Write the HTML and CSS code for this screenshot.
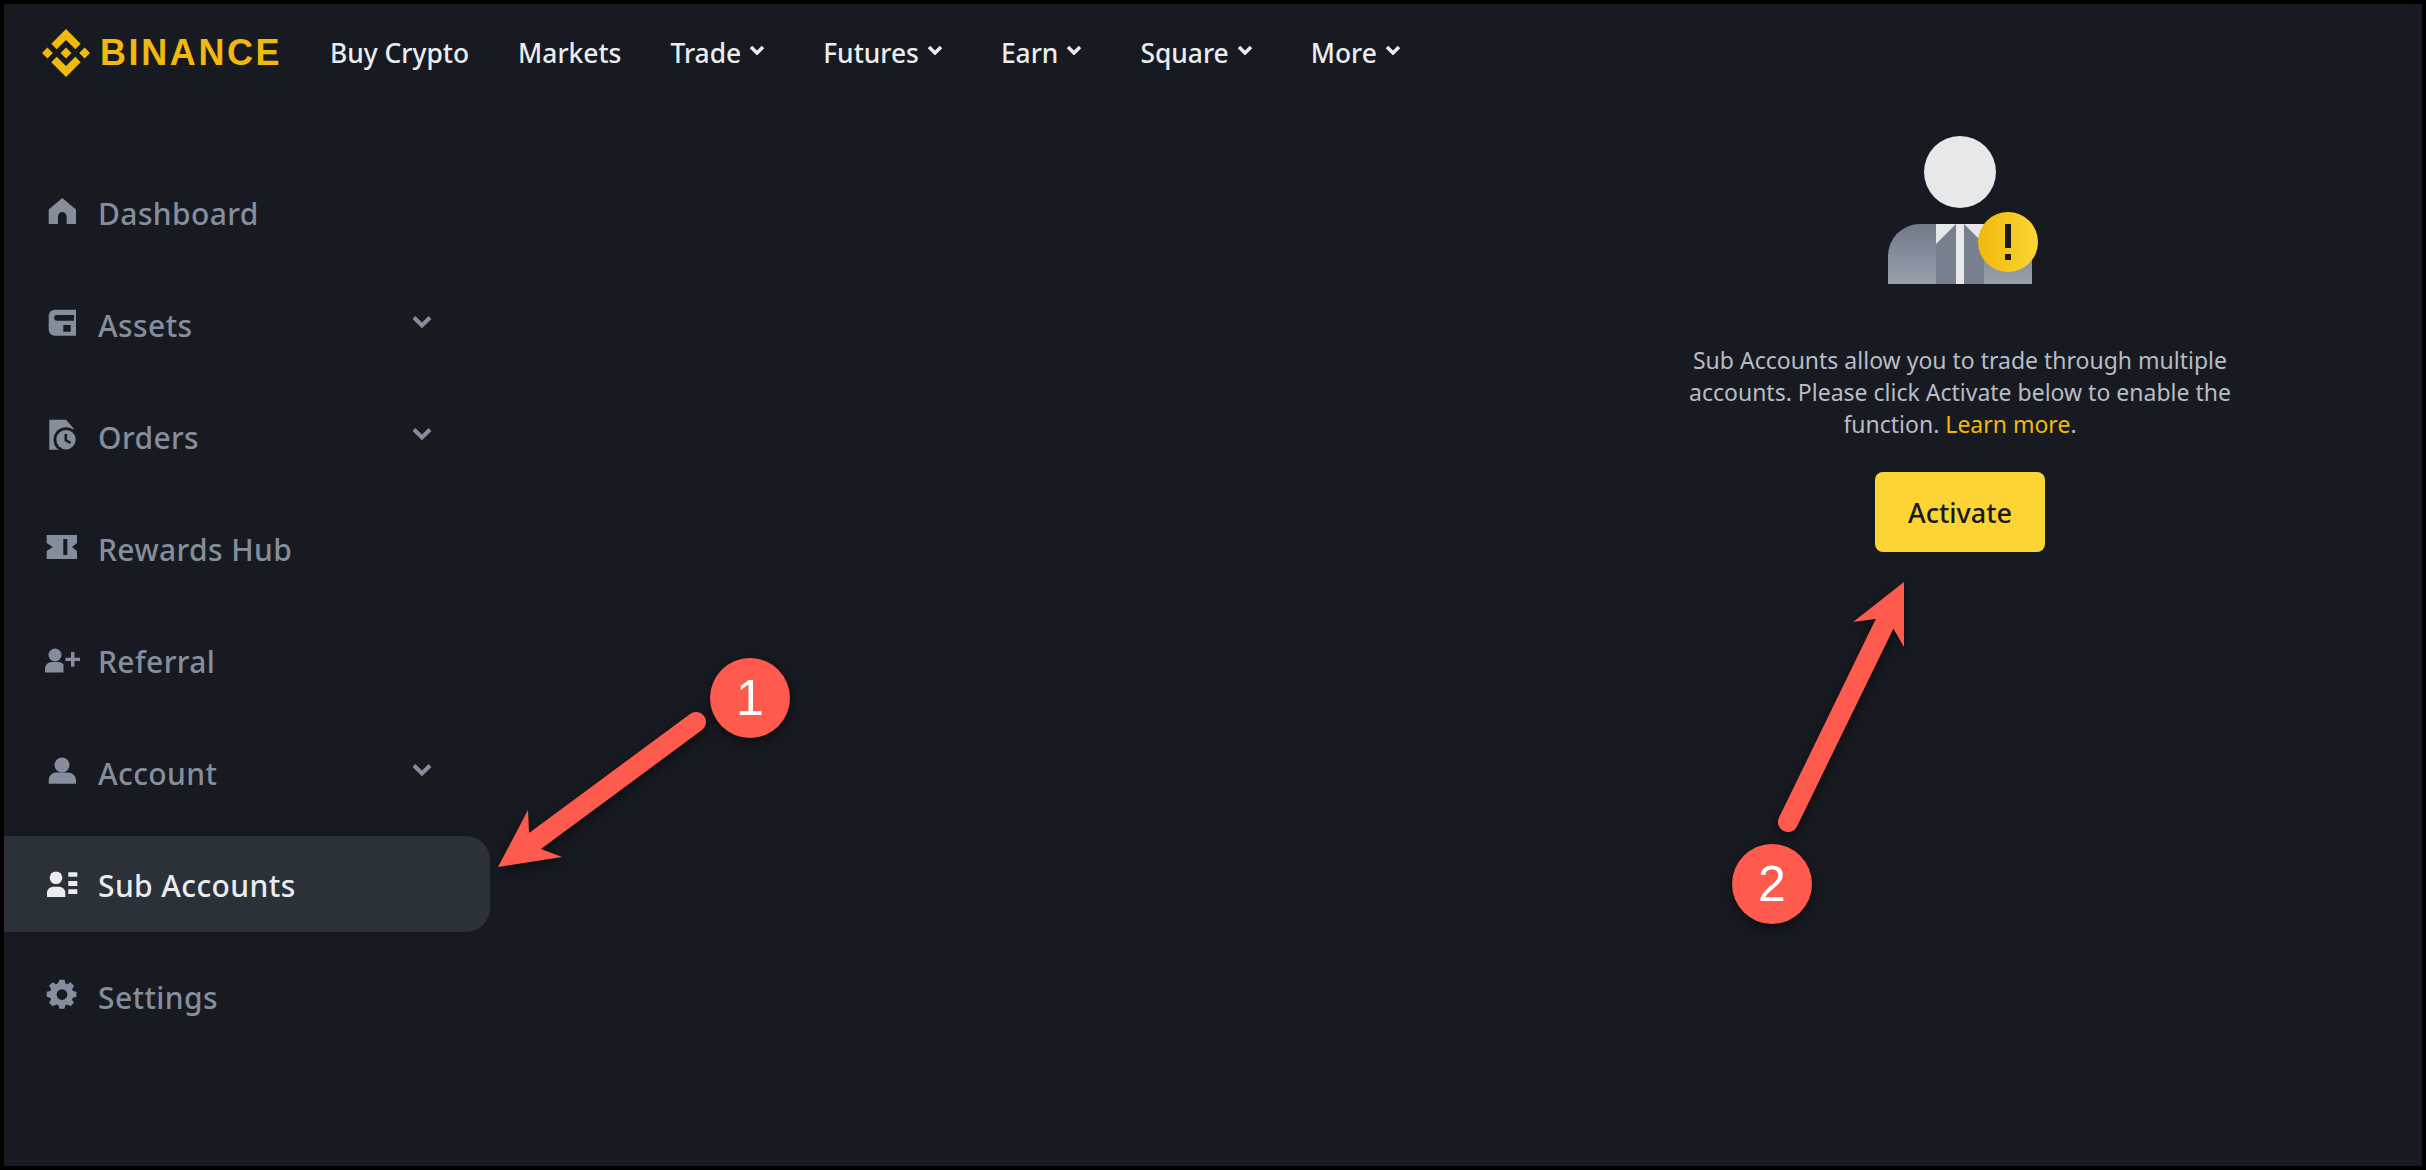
FILE: index.html
```html
<!DOCTYPE html>
<html lang="en">
<head>
    <meta charset="UTF-8">
    <title>Binance - Sub Accounts</title>
    <link rel="stylesheet" href="styles.css">
</head>
<body>

<div class="frame">
    <header class="topbar">
        <a class="logo">
            <svg class="logo-mark" viewBox="0 0 48 48"><path d="M14.700 20.200 24 10.900l9.300 9.300 5.400-5.400L24 0 9.300 14.800zM0 24l5.400-5.400L10.800 24l-5.400 5.400zM14.700 27.800 24 37.100l9.300-9.300 5.400 5.400L24 48 9.300 33.200zM37.200 24l5.400-5.400L48 24l-5.400 5.400zM29.500 24 24 18.500 18.500 24l5.500 5.500z"/></svg>
            <span class="logo-text">BINANCE</span>
        </a>
        <nav class="nav">
            <a class="nav-link">Buy Crypto</a>
            <a class="nav-link">Markets</a>
            <a class="nav-link has-menu">Trade <svg class="caret" viewBox="0 0 16 10"><path d="M2 2l6 6 6-6"/></svg></a>
            <a class="nav-link has-menu">Futures <svg class="caret" viewBox="0 0 16 10"><path d="M2 2l6 6 6-6"/></svg></a>
            <a class="nav-link has-menu">Earn <svg class="caret" viewBox="0 0 16 10"><path d="M2 2l6 6 6-6"/></svg></a>
            <a class="nav-link has-menu">Square <svg class="caret" viewBox="0 0 16 10"><path d="M2 2l6 6 6-6"/></svg></a>
            <a class="nav-link has-menu">More <svg class="caret" viewBox="0 0 16 10"><path d="M2 2l6 6 6-6"/></svg></a>
        </nav>
    </header>

    <div class="page">
        <aside class="sidebar">
            <a class="side-item">
                <svg class="side-icon" viewBox="0 0 40 40"><path d="M20.300 6 34 17.500V32h-9.300v-7.500a4.400 4.400 0 0 0-8.800 0V32H6.700V17.500z"/></svg>
                <span class="side-label">Dashboard</span>
            </a>
            <a class="side-item">
                <svg class="side-icon" viewBox="0 0 40 40"><path fill-rule="evenodd" d="M12.700 5.700H34v26H12.700a6 6 0 0 1-6-6v-14a6 6 0 0 1 6-6zM15 11a2.800 2.800 0 0 0 0 5.700h17V11zM21.300 21v6.700h7.400V21z"/></svg>
                <span class="side-label">Assets</span>
                <svg class="side-caret" viewBox="0 0 20 14"><path d="M2 2.500l8 8 8-8"/></svg>
            </a>
            <a class="side-item">
                <svg class="side-icon" viewBox="0 0 40 40"><path d="M7.300 3.700H24l7.500 8.500V33.700H7.300z"/><circle class="icon-gap" cx="24" cy="23.700" r="12.500"/><circle cx="24" cy="23.700" r="9.700"/><path class="icon-cut" d="M23.800 18v6.200l4.700 2.800"/></svg>
                <span class="side-label">Orders</span>
                <svg class="side-caret" viewBox="0 0 20 14"><path d="M2 2.500l8 8 8-8"/></svg>
            </a>
            <a class="side-item">
                <svg class="side-icon" viewBox="0 0 40 40"><path fill-rule="evenodd" d="M4.700 7H35v8l-5 4 5 4v8H4.700v-8l6-4-6-4zM21.300 11v16h4V11z"/></svg>
                <span class="side-label">Rewards Hub</span>
            </a>
            <a class="side-item">
                <svg class="side-icon" viewBox="0 0 40 40"><circle cx="13" cy="15" r="6.500"/><path d="M3 32.600v-4a6.500 6.500 0 0 1 6.500-6.500h7a6.500 6.500 0 0 1 5 2.400v8.100zM29 12h3.400v5.700H38v3.400h-5.600v5.700H29v-5.700h-5.600v-3.400H29z"/></svg>
                <span class="side-label">Referral</span>
            </a>
            <a class="side-item">
                <svg class="side-icon" viewBox="0 0 40 40"><circle cx="20" cy="13" r="7.500"/><path d="M6.700 31.800v-4a7.300 7.300 0 0 1 7.300-7.300h12a8 8 0 0 1 8 7.300v4z"/></svg>
                <span class="side-label">Account</span>
                <svg class="side-caret" viewBox="0 0 20 14"><path d="M2 2.500l8 8 8-8"/></svg>
            </a>
            <a class="side-item active">
                <svg class="side-icon" viewBox="0 0 40 40"><circle cx="14" cy="13.700" r="6.300"/><path d="M5 33v-4a6.300 6.300 0 0 1 6.300-6.300h5.700a6.300 6.300 0 0 1 6.300 6.300v4zM26.300 8.300h9v4.400h-9zM26.300 17h9v5h-9zM26.300 25.300h9V30h-9z"/></svg>
                <span class="side-label">Sub Accounts</span>
            </a>
            <a class="side-item">
                <svg class="side-icon" viewBox="0 0 40 40"><path fill-rule="evenodd" transform="translate(3 1.300) scale(.85)" d="M17 3h6l1 4.200 2.300 1 3.700-2.300 4.200 4.200-2.300 3.700 1 2.300L37 17v6l-4.200 1-1 2.300 2.300 3.700-4.200 4.200-3.700-2.300-2.300 1-1 4.100h-6l-1-4.100-2.300-1L9 34.200 4.800 30l2.300-3.700-1-2.300L2 23v-6l4.200-1 1-2.300L4.800 10 9 5.900l3.700 2.300 2.300-1zM20 14a6.300 6.300 0 1 0 0 12.600 6.300 6.300 0 0 0 0-12.600z"/></svg>
                <span class="side-label">Settings</span>
            </a>
        </aside>

        <main class="content">
            <svg class="empty-art" viewBox="0 0 144 148">
                <defs>
                    <linearGradient id="suit" x1="0" y1="0" x2="0" y2="1"><stop offset="0" stop-color="#707a8a"/><stop offset="1" stop-color="#98a0ab"/></linearGradient>
                    <linearGradient id="badge" x1="0" y1="0" x2="1" y2="0"><stop offset="0" stop-color="#f0b90b"/><stop offset="1" stop-color="#fcd535"/></linearGradient>
                </defs>
                <circle cx="72" cy="36" r="36" fill="#e6e8ea"/>
                <path d="M0 148v-28a32 32 0 0 1 32-32h80a32 32 0 0 1 32 32v28z" fill="url(#suit)"/>
                <path d="M48 88h48v60H48z" fill="#76808f"/>
                <path d="M48 88h20L48 108zM76 88h20v20z" fill="#e6e8ea"/>
                <path d="M68 88h8v60h-8z" fill="#e6e8ea"/>
                <circle cx="120" cy="106" r="30" fill="url(#badge)"/>
                <path d="M117 88h6v24h-6zM117 118h6v6h-6z" fill="#181a20"/>
            </svg>
            <p class="empty-text">Sub Accounts allow you to trade through multiple accounts. Please click Activate below to enable the function. <a class="learn">Learn more</a>.</p>
            <button class="activate">Activate</button>
        </main>
    </div>

    <svg class="marks" viewBox="0 0 2426 1170">
        <g class="mark">
            <path class="mark-line" d="M696 722 535 841"/>
            <path d="M498 867 528 810 529 832 541 849 562 857z"/>
            <path class="mark-line" d="M1788 822 1884 625"/>
            <path d="M1904 582 1904 647 1893 628 1875 619 1853 622z"/>
            <circle cx="750" cy="698" r="40"/>
            <circle cx="1772" cy="884" r="40"/>
        </g>
    </svg>
    <span class="mark-num one">1</span>
    <span class="mark-num two">2</span>
</div>

</body>
</html>
```

FILE: styles.css
```css
* {
    box-sizing: border-box;
}

html, body {
    margin: 0;
    height: 100%;
}

body {
    background-color: #000;
    font-family: "Noto Sans", Arial, sans-serif;
}

.frame {
    position: relative;
    height: 1170px;
    border: 4px solid #000;
    background-color: #181a21;
    overflow: hidden;
}

/* top navigation */
.topbar {
    display: flex;
    align-items: center;
    height: 98px;
    padding-left: 38px;
}

.logo {
    display: flex;
    align-items: center;
    gap: 10px;
    width: 288px;
}

.logo-mark {
    width: 48px;
    height: 48px;
    fill: #f0b90b;
}

.logo-text {
    font-family: "Liberation Sans", Arial, sans-serif;
    font-size: 36px;
    font-weight: 700;
    letter-spacing: 2.6px;
    color: #f0b90b;
}

.nav {
    display: flex;
    align-items: center;
    gap: 49px;
}

.nav-link {
    display: flex;
    align-items: center;
    gap: 8px;
    font-size: 26.4px;
    font-weight: 500;
    color: #eaecef;
}

.caret {
    width: 16px;
    height: 10px;
    margin-bottom: 6px;
    fill: none;
    stroke: #eaecef;
    stroke-width: 3.5;
}

.has-menu {
    margin-right: 9px;
}

/* sidebar */
.page {
    display: flex;
}

.sidebar {
    display: flex;
    flex-direction: column;
    gap: 16px;
    width: 486px;
    padding-top: 62px;
}

.side-item {
    display: flex;
    align-items: center;
    gap: 16px;
    height: 96px;
    padding: 0 58px 0 38px;
    font-size: 30px;
    font-weight: 500;
    letter-spacing: 0.4px;
    color: #848e9c;
}

.side-item.active {
    background-color: #2b3139;
    border-radius: 0 24px 24px 0;
    color: #eaecef;
}

.side-icon {
    flex: none;
    width: 40px;
    height: 40px;
    fill: #848e9c;
}

.active .side-icon {
    fill: #eaecef;
}

.icon-gap {
    fill: #181a21;
}

.icon-cut {
    fill: none;
    stroke: #181a21;
    stroke-width: 2.6;
}

.side-label {
    flex: 1;
    padding-top: 2px;
}

.side-caret {
    width: 20px;
    height: 14px;
    margin-bottom: 4px;
    fill: none;
    stroke: #848e9c;
    stroke-width: 4;
}

/* empty state */
.content {
    display: flex;
    flex-direction: column;
    align-items: center;
    width: 600px;
    margin-left: 1170px;
    margin-top: 34px;
}

.empty-art {
    width: 144px;
    height: 148px;
    overflow: visible;
}

.empty-text {
    margin: 60px 0 0;
    font-size: 23px;
    line-height: 32px;
    text-align: center;
    color: #b7bdc6;
}

.learn {
    color: #f0b90b;
}

.activate {
    width: 170px;
    height: 80px;
    margin-top: 32px;
    border: none;
    border-radius: 8px;
    background-color: #fcd535;
    font-family: inherit;
    font-size: 27px;
    font-weight: 500;
    color: #181a20;
}

/* red annotations laid over the page */
.marks {
    position: absolute;
    left: -4px;
    top: -4px;
    width: 2426px;
    height: 1170px;
    pointer-events: none;
}

.mark {
    fill: #fe5a4d;
    filter: drop-shadow(0 4px 6px rgba(0, 0, 0, 0.5));
}

.mark-line {
    fill: none;
    stroke: #fe5a4d;
    stroke-width: 20;
    stroke-linecap: round;
}

.mark-num {
    position: absolute;
    width: 80px;
    text-align: center;
    font-family: "Liberation Sans", Arial, sans-serif;
    font-size: 50px;
    line-height: 80px;
    color: #fff;
}

.mark-num.one {
    left: 706px;
    top: 654px;
}

.mark-num.two {
    left: 1728px;
    top: 840px;
}
```
